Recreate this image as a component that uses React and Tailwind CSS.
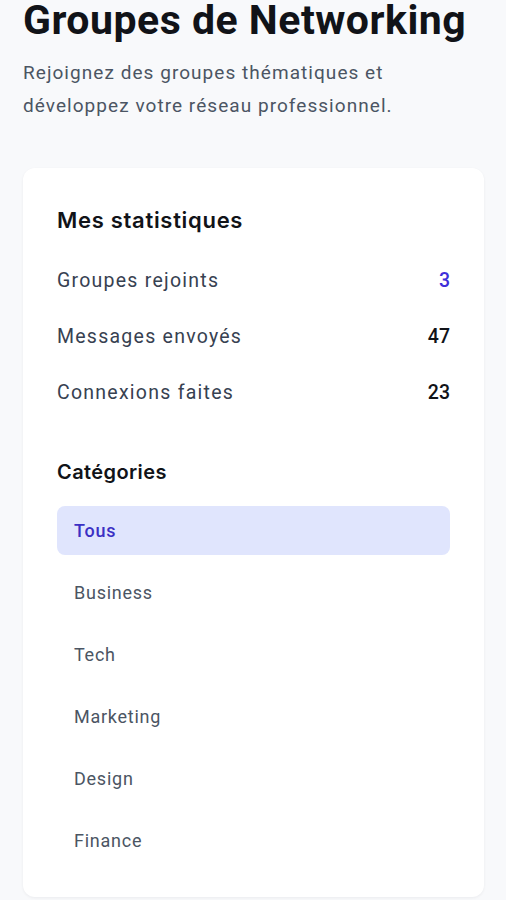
export default function App() {
  const stats = [
    { label: "Groupes rejoints", value: "3", accent: true },
    { label: "Messages envoyés", value: "47" },
    { label: "Connexions faites", value: "23" },
  ];
  const categories = ["Tous", "Business", "Tech", "Marketing", "Design", "Finance"];

  return (
    <div className="min-h-[900px] bg-[#f8f9fb] px-[23px] pr-[22px] font-['Roboto',sans-serif]">
      <h1 className="text-[41px] leading-[40px] font-bold tracking-[0.5px] text-[#111318]">
        Groupes de Networking
      </h1>
      <p className="mt-[16px] text-[19px] leading-[33px] tracking-[1.05px] text-[#4b5563]">
        Rejoignez des groupes thématiques et développez votre réseau professionnel.
      </p>

      <div className="mt-[46px] rounded-xl bg-white px-[34px] pt-[38px] pb-[32px] shadow-[0_1px_3px_rgba(15,23,42,0.06)]">
        <h2 className="font-['Inter',sans-serif] text-[22px] leading-[28px] font-semibold tracking-[0.7px] text-[#111318]">
          Mes statistiques
        </h2>
        <div className="mt-[33px] flex flex-col gap-[28px]">
          {stats.map((s) => (
            <div key={s.label} className="flex items-center justify-between text-[19.5px] leading-[28px]">
              <span className="tracking-[1.25px] text-[#374151]">{s.label}</span>
              <span className={`font-medium ${s.accent ? "text-[#3f2fd9]" : "text-[#111318]"}`}>
                {s.value}
              </span>
            </div>
          ))}
        </div>

        <h2 className="mt-[51px] font-['Inter',sans-serif] text-[20px] leading-[28px] font-semibold tracking-[0.4px] text-[#111318]">
          Catégories
        </h2>
        <div className="mt-[20px] flex flex-col gap-[13px]">
          {categories.map((c, i) => (
            <div
              key={c}
              className={`flex h-[49px] items-center rounded-lg px-[17px] text-[18px] tracking-[0.75px] ${
                i === 0 ? "bg-[#e0e5fd] font-medium text-[#3b2fc4]" : "text-[#4b5563]"
              }`}
            >
              {c}
            </div>
          ))}
        </div>
      </div>
    </div>
  );
}
